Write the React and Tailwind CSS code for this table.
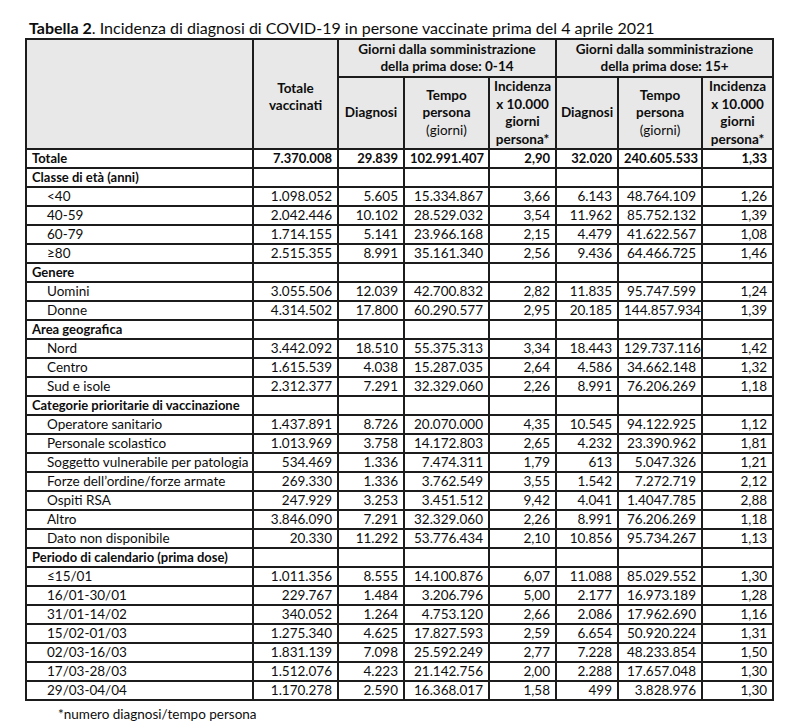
import React from 'react';

const sections = [
  { type: 'total', label: 'Totale', v: ['7.370.008', '29.839', '102.991.407', '2,90', '32.020', '240.605.533', '1,33'] },
  { type: 'cat', label: 'Classe di età (anni)' },
  { label: '<40', v: ['1.098.052', '5.605', '15.334.867', '3,66', '6.143', '48.764.109', '1,26'] },
  { label: '40-59', v: ['2.042.446', '10.102', '28.529.032', '3,54', '11.962', '85.752.132', '1,39'] },
  { label: '60-79', v: ['1.714.155', '5.141', '23.966.168', '2,15', '4.479', '41.622.567', '1,08'] },
  { label: '≥80', v: ['2.515.355', '8.991', '35.161.340', '2,56', '9.436', '64.466.725', '1,46'] },
  { type: 'cat', label: 'Genere' },
  { label: 'Uomini', v: ['3.055.506', '12.039', '42.700.832', '2,82', '11.835', '95.747.599', '1,24'] },
  { label: 'Donne', v: ['4.314.502', '17.800', '60.290.577', '2,95', '20.185', '144.857.934', '1,39'] },
  { type: 'cat', label: 'Area geografica' },
  { label: 'Nord', v: ['3.442.092', '18.510', '55.375.313', '3,34', '18.443', '129.737.116', '1,42'] },
  { label: 'Centro', v: ['1.615.539', '4.038', '15.287.035', '2,64', '4.586', '34.662.148', '1,32'] },
  { label: 'Sud e isole', v: ['2.312.377', '7.291', '32.329.060', '2,26', '8.991', '76.206.269', '1,18'] },
  { type: 'cat', label: 'Categorie prioritarie di vaccinazione' },
  { label: 'Operatore sanitario', v: ['1.437.891', '8.726', '20.070.000', '4,35', '10.545', '94.122.925', '1,12'] },
  { label: 'Personale scolastico', v: ['1.013.969', '3.758', '14.172.803', '2,65', '4.232', '23.390.962', '1,81'] },
  { label: 'Soggetto vulnerabile per patologia', v: ['534.469', '1.336', '7.474.311', '1,79', '613', '5.047.326', '1,21'] },
  { label: 'Forze dell’ordine/forze armate', v: ['269.330', '1.336', '3.762.549', '3,55', '1.542', '7.272.719', '2,12'] },
  { label: 'Ospiti RSA', v: ['247.929', '3.253', '3.451.512', '9,42', '4.041', '1.4047.785', '2,88'] },
  { label: 'Altro', v: ['3.846.090', '7.291', '32.329.060', '2,26', '8.991', '76.206.269', '1,18'] },
  { label: 'Dato non disponibile', v: ['20.330', '11.292', '53.776.434', '2,10', '10.856', '95.734.267', '1,13'] },
  { type: 'cat', label: 'Periodo di calendario (prima dose)' },
  { label: '≤15/01', v: ['1.011.356', '8.555', '14.100.876', '6,07', '11.088', '85.029.552', '1,30'] },
  { label: '16/01-30/01', v: ['229.767', '1.484', '3.206.796', '5,00', '2.177', '16.973.189', '1,28'] },
  { label: '31/01-14/02', v: ['340.052', '1.264', '4.753.120', '2,66', '2.086', '17.962.690', '1,16'] },
  { label: '15/02-01/03', v: ['1.275.340', '4.625', '17.827.593', '2,59', '6.654', '50.920.224', '1,31'] },
  { label: '02/03-16/03', v: ['1.831.139', '7.098', '25.592.249', '2,77', '7.228', '48.233.854', '1,50'] },
  { label: '17/03-28/03', v: ['1.512.076', '4.223', '21.142.756', '2,00', '2.288', '17.657.048', '1,30'] },
  { label: '29/03-04/04', v: ['1.170.278', '2.590', '16.368.017', '1,58', '499', '3.828.976', '1,30'] },
];

const border = 'border-2 border-[#1c1c1c]';
const cell = `${border} px-[5px] leading-none whitespace-nowrap`;
const head = `${border} px-0 text-center leading-[17.5px]`;

export default function App() {
  return (
    <div className="min-h-screen bg-white text-[#0d0d0d] font-['Lato',sans-serif]">
      <div className="pl-[29px] pt-[18px] text-[16px] leading-[20px]">
        <span className="font-bold">Tabella 2</span>. Incidenza di diagnosi di COVID-19 in persone vaccinate prima del 4 aprile 2021
      </div>
      <table className="ml-[25px] w-[747px] table-fixed border-collapse text-[13px]">
        <colgroup>
          <col className="w-[227px]" />
          <col className="w-[85px]" />
          <col className="w-[66px]" />
          <col className="w-[85px]" />
          <col className="w-[67px]" />
          <col className="w-[62px]" />
          <col className="w-[84px]" />
          <col className="w-[71px]" />
        </colgroup>
        <thead className="bg-[#e8e8e8] font-bold text-[13.5px]">
          <tr className="h-[38px]">
            <th rowSpan={2} className={head}></th>
            <th rowSpan={2} className={`${head} pt-[6px]`}>Totale<br />vaccinati</th>
            <th colSpan={3} className={head}>Giorni dalla somministrazione<br />della prima dose: 0-14</th>
            <th colSpan={3} className={head}>Giorni dalla somministrazione<br />della prima dose: 15+</th>
          </tr>
          <tr className="h-[71px]">
            <th className={head}>Diagnosi</th>
            <th className={head}>Tempo<br />persona<br /><span className="font-normal">(giorni)</span></th>
            <th className={head}>Incidenza<br />x 10.000<br />giorni<br />persona*</th>
            <th className={head}>Diagnosi</th>
            <th className={head}>Tempo<br />persona<br /><span className="font-normal">(giorni)</span></th>
            <th className={head}>Incidenza<br />x 10.000<br />giorni<br />persona*</th>
          </tr>
        </thead>
        <tbody>
          {sections.map((r, i) => (
            <tr key={i} className="h-[19px]">
              <td className={`${cell} ${r.type ? 'font-bold' : 'pl-[20px] text-[13.5px]'}`}>{r.label}</td>
              {(r.v || ['', '', '', '', '', '', '']).map((x, j) => (
                <td key={j} className={`${cell} text-right ${r.type === 'total' ? 'font-bold' : 'text-[13.5px]'}`}>{x}</td>
              ))}
            </tr>
          ))}
        </tbody>
      </table>
      <div className="pl-[58px] pt-[3px] text-[13.5px]">*numero diagnosi/tempo persona</div>
    </div>
  );
}
